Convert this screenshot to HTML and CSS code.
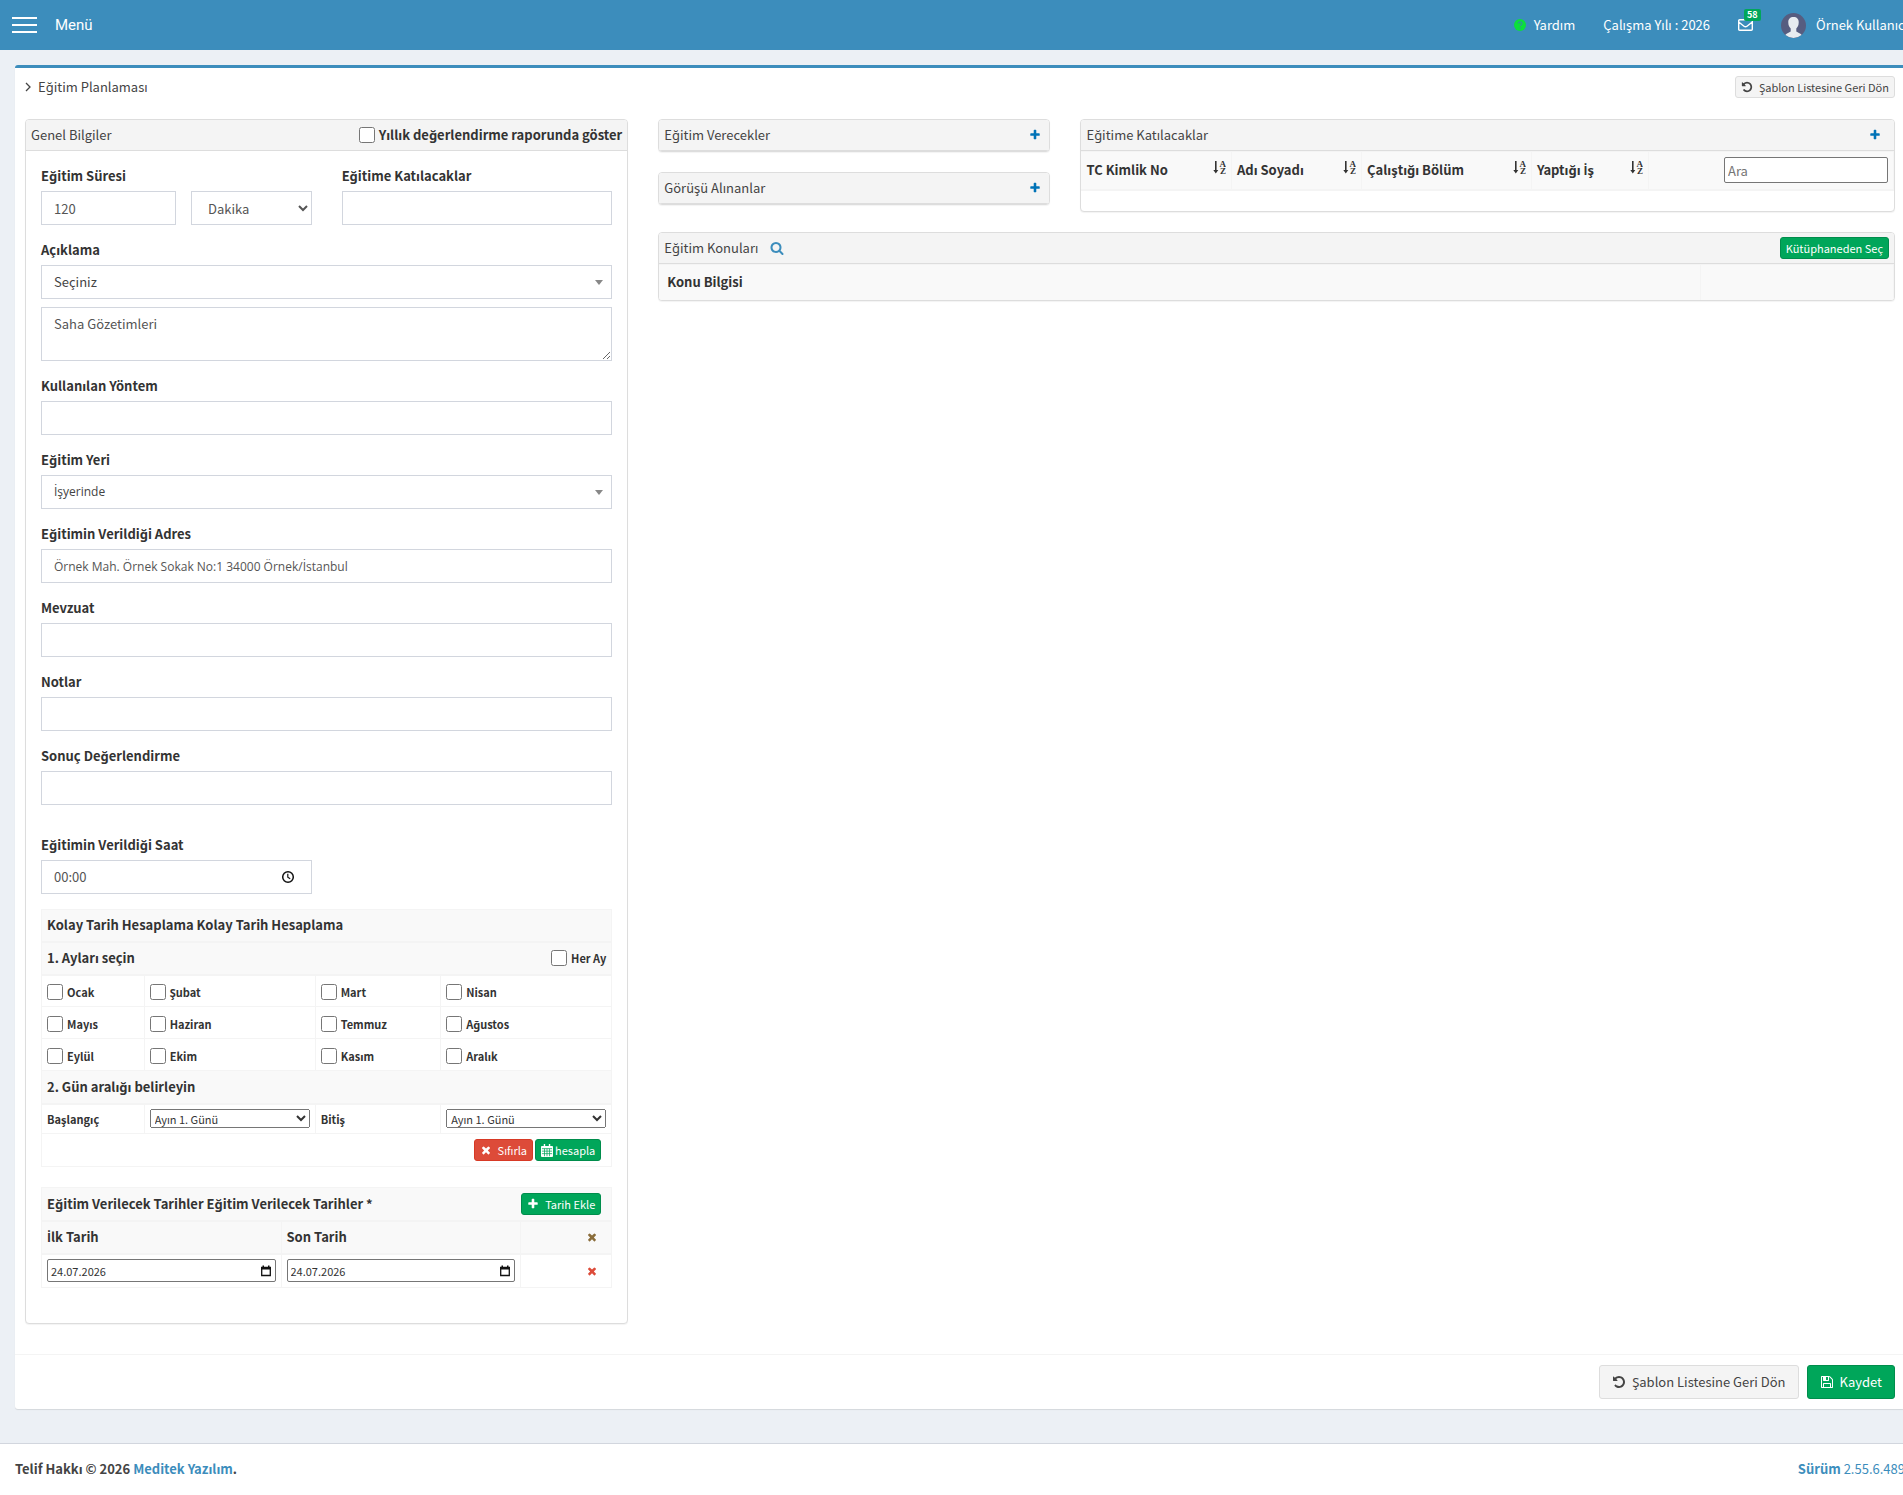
FILE: index.html
```
<!DOCTYPE html>
<html lang="tr">
<head>
    <meta charset="UTF-8">
    <meta name="viewport" content="width=device-width, initial-scale=1.0">
    <title>Eğitim Planlaması</title>
    <link rel="stylesheet" href="styles.css">
</head>
<body>
    <!-- icons -->
    <svg class="sprite" aria-hidden="true">
        <symbol id="i-plus" viewBox="0 0 1792 1792"><path d="M1600 736v192q0 40-28 68t-68 28h-416v416q0 40-28 68t-68 28h-192q-40 0-68-28t-28-68v-416h-416q-40 0-68-28t-28-68v-192q0-40 28-68t68-28h416v-416q0-40 28-68t68-28h192q40 0 68 28t28 68v416h416q40 0 68 28t28 68z"/></symbol>
        <symbol id="i-times" viewBox="0 0 1792 1792"><path d="M1490 1322q0 40-28 68l-136 136q-28 28-68 28t-68-28l-294-294-294 294q-28 28-68 28t-68-28l-136-136q-28-28-28-68t28-68l294-294-294-294q-28-28-28-68t28-68l136-136q28-28 68-28t68 28l294 294 294-294q28-28 68-28t68 28l136 136q28 28 28 68t-28 68l-294 294 294 294q28 28 28 68z"/></symbol>
        <symbol id="i-search" viewBox="0 0 1792 1792"><path d="M1216 832q0-185-131.500-316.500t-316.500-131.500-316.500 131.500-131.500 316.500 131.500 316.500 316.500 131.500 316.500-131.500 131.500-316.500zm512 832q0 52-38 90t-90 38q-54 0-90-38l-343-342q-179 124-399 124-143 0-273.500-55.500t-225-150-150-225-55.500-273.500 55.500-273.500 150-225 225-150 273.500-55.500 273.500 55.500 225 150 150 225 55.500 273.500q0 220-124 399l343 343q37 37 37 90z"/></symbol>
        <symbol id="i-undo" viewBox="0 0 1792 1792"><path d="M1664 896q0 156-61 298t-164 245-245 164-298 61q-172 0-327-72.500t-264-204.500q-7-10-6.500-22.500t8.500-20.500l137-138q10-9 25-9 16 2 23 12 73 95 179 147t225 52q104 0 198.500-40.500t163.500-109.500 109.500-163.500 40.500-198.500-40.500-198.500-109.500-163.500-163.500-109.500-198.500-40.500q-98 0-188 35.500t-160 101.500l137 138q31 30 14 69-17 40-59 40h-448q-26 0-45-19t-19-45v-448q0-42 40-59 39-17 69 14l130 129q107-101 244.500-156.500t284.500-55.500q156 0 298 61t245 164 164 245 61 298z"/></symbol>
        <symbol id="i-save" viewBox="0 0 1792 1792"><path d="M512 1536h768v-384h-768v384zm896 0h128v-896q0-14-10-38.500t-20-34.500l-281-281q-10-10-34-20t-39-10v416q0 40-28 68t-68 28h-576q-40 0-68-28t-28-68v-416h-128v1280h128v-416q0-40 28-68t68-28h832q40 0 68 28t28 68v416zm-384-928v-320q0-13-9.500-22.500t-22.500-9.500h-192q-13 0-22.500 9.500t-9.500 22.500v320q0 13 9.500 22.500t22.500 9.500h192q13 0 22.500-9.500t9.500-22.500zm640 32v928q0 40-28 68t-68 28h-1344q-40 0-68-28t-28-68v-1344q0-40 28-68t68-28h928q40 0 88 20t76 48l280 280q28 28 48 76t20 88z"/></symbol>
        <symbol id="i-angle" viewBox="0 0 6 10"><path d="M1 1l4 4-4 4" fill="none" stroke="currentColor" stroke-width="1.3"/></symbol>
        <symbol id="i-sort" viewBox="0 0 13 15"><path d="M2 1h1.600v9h1.700L2.800 13.500.3 10H2z"/><text x="6.500" y="7" font-size="9" font-family="Liberation Serif, serif">A</text><text x="7" y="14" font-size="9" font-family="Liberation Serif, serif">Z</text></symbol>
        <symbol id="i-help" viewBox="0 0 12 12"><circle cx="6" cy="6" r="6"/><path d="M4.200 4.600q0-1.600 1.900-1.600t1.900 1.500q0 .8-.9 1.300-.8.400-.8 1.200M6.300 8.200v1.300" fill="none" stroke="#2a9d8f" stroke-width="1.300"/></symbol>
        <symbol id="i-mail" viewBox="0 0 15 12"><path d="M.7 1.700q0-1 1-1h11.600q1 0 1 1v8.600q0 1-1 1H1.700q-1 0-1-1zM.7 3l5.300 4.200q1.500 1.200 3 0L14.300 3" fill="none" stroke="currentColor" stroke-width="1.400"/></symbol>
        <symbol id="i-calc" viewBox="0 0 13 14"><path d="M1 2h11q1 0 1 1v10q0 1-1 1H1q-1 0-1-1V3q0-1 1-1zM3 0h1.500v3H3zM8.500 0H10v3H8.500z"/><path d="M1 5h11M1 7.700h11M1 10.400h11M3.800 5v8.200M6.500 5v8.200M9.200 5v8.200" fill="none" stroke="#00a65a" stroke-width=".8"/></symbol>
        <symbol id="i-clock" viewBox="0 0 14 14"><circle cx="7" cy="7" r="5.300" fill="none" stroke="currentColor" stroke-width="1.500"/><path d="M6.800 3.800v3.400l2.400 1.600" fill="none" stroke="currentColor" stroke-width="1.200"/></symbol>
        <symbol id="i-date" viewBox="0 0 12 12"><path d="M1.700 2.500h8.600v8H1.700z" fill="none" stroke="currentColor" stroke-width="1.300"/><path d="M1 2h10v2.500H1zM2.500.5h1.500v2H2.500zM8 .5h1.500v2H8z"/></symbol>
    </svg>

    <div class="wrapper">
        <header class="main-header">
            <button type="button" class="sidebar-toggle" aria-label="Menüyü aç"><span></span><span></span><span></span></button>
            <span class="menu-title">Menü</span>
            <nav class="top-nav">
                <a href="#" class="nav-help"><svg class="icon-help"><use href="#i-help"/></svg>Yardım</a>
                <a href="#" class="nav-year">Çalışma Yılı : 2026</a>
                <a href="#" class="nav-mail" aria-label="Mesajlar"><svg class="icon-mail"><use href="#i-mail"/></svg><span class="badge">58</span></a>
                <a href="#" class="nav-user">
                    <svg class="avatar" viewBox="0 0 25 25"><circle cx="12.500" cy="12.500" r="12.500" fill="#565d80"/><path d="M12.500 4c3.500 0 5.300 2.200 5.200 5.500 0 3-1 4.500-2.400 6v3l4.500 2.500q.6.300.7 1.100a12.500 12.500 0 0 1-16 0q.1-.8.7-1.100l4.500-2.500v-3c-1.400-1.500-2.400-3-2.400-6C7.200 6.200 9 4 12.500 4z" fill="#e7ecf0"/></svg>Örnek Kullanıcı</a>
            </nav>
        </header>

        <main class="box">
            <div class="box-header">
                <div class="breadcrumb"><svg class="icon-angle"><use href="#i-angle"/></svg>Eğitim Planlaması</div>
                <button type="button" class="btn btn-default btn-xs"><svg class="icon"><use href="#i-undo"/></svg>Şablon Listesine Geri Dön</button>
            </div>

            <div class="columns">
                <section class="panel">
                    <div class="panel-heading">
                        <h2>Genel Bilgiler</h2>
                        <label class="check check-lg"><input type="checkbox">Yıllık değerlendirme raporunda göster</label>
                    </div>
                    <form class="panel-body">
                        <div class="form-row">
                            <div class="form-group">
                                <label for="sure">Eğitim Süresi</label>
                                <div class="form-row tight">
                                    <input type="text" id="sure" class="form-control" value="120">
                                    <select class="form-control native" aria-label="Süre birimi"><option>Dakika</option></select>
                                </div>
                            </div>
                            <div class="form-group">
                                <label for="katilacak">Eğitime Katılacaklar</label>
                                <input type="text" id="katilacak" class="form-control">
                            </div>
                        </div>
                        <div class="form-group">
                            <label for="aciklama">Açıklama</label>
                            <div class="select2"><select id="aciklama" class="form-control"><option>Seçiniz</option></select></div>
                            <textarea class="form-control" aria-label="Açıklama metni">Saha Gözetimleri</textarea>
                        </div>
                        <div class="form-group">
                            <label for="yontem">Kullanılan Yöntem</label>
                            <input type="text" id="yontem" class="form-control">
                        </div>
                        <div class="form-group">
                            <label for="yer">Eğitim Yeri</label>
                            <div class="select2"><select id="yer" class="form-control dotted"><option>İşyerinde</option></select></div>
                        </div>
                        <div class="form-group">
                            <label for="adres">Eğitimin Verildiği Adres</label>
                            <input type="text" id="adres" class="form-control dotted" value="Örnek Mah. Örnek Sokak No:1 34000 Örnek/İstanbul">
                        </div>
                        <div class="form-group">
                            <label for="mevzuat">Mevzuat</label>
                            <input type="text" id="mevzuat" class="form-control">
                        </div>
                        <div class="form-group">
                            <label for="notlar">Notlar</label>
                            <input type="text" id="notlar" class="form-control">
                        </div>
                        <div class="form-group last">
                            <label for="sonuc">Sonuç Değerlendirme</label>
                            <input type="text" id="sonuc" class="form-control">
                        </div>
                        <div class="form-row">
                            <div class="form-group">
                                <label for="saat">Eğitimin Verildiği Saat</label>
                                <div class="form-control time-box"><input type="text" id="saat" value="00:00"><svg class="icon-clock"><use href="#i-clock"/></svg></div>
                            </div>
                        </div>

                        <table class="table month-table">
                            <colgroup><col class="c1"><col class="c2"><col class="c3"><col class="c4"></colgroup>
                            <tr class="shade"><th colspan="4">Kolay Tarih Hesaplama Kolay Tarih Hesaplama</th></tr>
                            <tr class="shade tall">
                                <th colspan="4"><div class="cell-split">1. Ayları seçin <label class="check"><input type="checkbox">Her Ay</label></div></th>
                            </tr>
                            <tr class="months">
                                <td><label class="check"><input type="checkbox">Ocak</label></td>
                                <td><label class="check"><input type="checkbox">Şubat</label></td>
                                <td><label class="check"><input type="checkbox">Mart</label></td>
                                <td><label class="check"><input type="checkbox">Nisan</label></td>
                            </tr>
                            <tr class="months">
                                <td><label class="check"><input type="checkbox">Mayıs</label></td>
                                <td><label class="check"><input type="checkbox">Haziran</label></td>
                                <td><label class="check"><input type="checkbox">Temmuz</label></td>
                                <td><label class="check"><input type="checkbox">Ağustos</label></td>
                            </tr>
                            <tr class="months">
                                <td><label class="check"><input type="checkbox">Eylül</label></td>
                                <td><label class="check"><input type="checkbox">Ekim</label></td>
                                <td><label class="check"><input type="checkbox">Kasım</label></td>
                                <td><label class="check"><input type="checkbox">Aralık</label></td>
                            </tr>
                            <tr class="shade tall"><th colspan="4">2. Gün aralığı belirleyin</th></tr>
                            <tr class="range-row">
                                <td><label for="baslangic">Başlangıç</label></td>
                                <td><select id="baslangic"><option>Ayın 1. Günü</option></select></td>
                                <td><label for="bitis">Bitiş</label></td>
                                <td><select id="bitis"><option>Ayın 1. Günü</option></select></td>
                            </tr>
                            <tr class="tall">
                                <td colspan="4"><div class="cell-buttons">
                                    <button type="button" class="btn btn-danger btn-xs"><svg class="icon"><use href="#i-times"/></svg>Sıfırla</button>
                                    <button type="button" class="btn btn-success btn-xs btn-calc"><svg class="icon-calc"><use href="#i-calc"/></svg>hesapla</button>
                                </div></td>
                            </tr>
                        </table>

                        <table class="table date-table">
                            <colgroup><col class="d1"><col class="d1"><col></colgroup>
                            <tr class="shade tall">
                                <th colspan="3"><div class="cell-split">Eğitim Verilecek Tarihler Eğitim Verilecek Tarihler *
                                    <span class="cell-buttons"><button type="button" class="btn btn-success btn-xs"><svg class="icon"><use href="#i-plus"/></svg>Tarih Ekle</button></span></div></th>
                            </tr>
                            <tr class="shade tall">
                                <th><span class="dotted">İ</span>lk Tarih</th>
                                <th>Son Tarih</th>
                                <th><button type="button" class="remove warn" aria-label="Tümünü sil"><svg class="icon-x"><use href="#i-times"/></svg></button></th>
                            </tr>
                            <tr class="date-row">
                                <td><div class="date-box"><input type="text" value="24.07.2026" aria-label="İlk Tarih"><svg class="icon-date"><use href="#i-date"/></svg></div></td>
                                <td><div class="date-box"><input type="text" value="24.07.2026" aria-label="Son Tarih"><svg class="icon-date"><use href="#i-date"/></svg></div></td>
                                <td><button type="button" class="remove" aria-label="Sil"><svg class="icon-x"><use href="#i-times"/></svg></button></td>
                            </tr>
                        </table>
                    </form>
                </section>

                <div class="side">
                    <div class="columns">
                        <div class="stack">
                            <section class="panel">
                                <div class="panel-heading"><h2>Eğitim Verecekler</h2><button type="button" class="add" aria-label="Ekle"><svg class="icon"><use href="#i-plus"/></svg></button></div>
                            </section>
                            <section class="panel">
                                <div class="panel-heading"><h2>Görüşü Alınanlar</h2><button type="button" class="add" aria-label="Ekle"><svg class="icon"><use href="#i-plus"/></svg></button></div>
                            </section>
                        </div>
                        <section class="panel people">
                            <div class="panel-heading"><h2>Eğitime Katılacaklar</h2><button type="button" class="add add-end" aria-label="Ekle"><svg class="icon"><use href="#i-plus"/></svg></button></div>
                            <table class="table people-table">
                                <colgroup><col class="p1"><col class="p2"><col class="p3"><col class="p4"><col></colgroup>
                                <tr class="shade">
                                    <th><div class="cell-split">TC Kimlik No<svg class="icon-sort"><use href="#i-sort"/></svg></div></th>
                                    <th><div class="cell-split">Adı Soyadı<svg class="icon-sort"><use href="#i-sort"/></svg></div></th>
                                    <th><div class="cell-split">Çalıştığı Bölüm<svg class="icon-sort"><use href="#i-sort"/></svg></div></th>
                                    <th><div class="cell-split"><span>Yaptığı <span class="dotted">İ</span>ş</span><svg class="icon-sort"><use href="#i-sort"/></svg></div></th>
                                    <th class="search-cell"><input type="text" placeholder="Ara" aria-label="Ara"></th>
                                </tr>
                            </table>
                        </section>
                    </div>
                    <section class="panel">
                        <div class="panel-heading">
                            <h2>Eğitim Konuları</h2>
                            <a href="#" class="search-link" aria-label="Konu ara"><svg class="icon"><use href="#i-search"/></svg></a>
                            <button type="button" class="btn btn-success btn-xs">Kütüphaneden Seç</button>
                        </div>
                        <table class="table topic-table">
                            <colgroup><col><col class="t2"></colgroup>
                            <tr class="shade"><th>Konu Bilgisi</th><th></th></tr>
                        </table>
                    </section>
                </div>
            </div>

            <div class="box-footer">
                <button type="button" class="btn btn-default"><svg class="icon"><use href="#i-undo"/></svg>Şablon Listesine Geri Dön</button>
                <button type="button" class="btn btn-success"><svg class="icon"><use href="#i-save"/></svg>Kaydet</button>
            </div>
        </main>

        <footer class="main-footer">
            <strong>Telif Hakkı © 2026 <a href="#">Meditek Yazılım</a>.</strong>
            <a href="#"><b>Sürüm</b> 2.55.6.489</a>
        </footer>
    </div>
</body>
</html>
```
FILE: styles.css
```
*{
    box-sizing: border-box;
}
html{
    overflow: hidden;
}
body{
    margin: 0;
    overflow: hidden;
    background-color: #ecf0f5;
    color: #333;
    font-family: "Noto Sans CJK SC", "Noto Sans", sans-serif;
    font-size: 13px;
    line-height: 20px;
}
input, select, textarea, button{
    font: inherit;
    color: inherit;
}
button{
    cursor: pointer;
}
a{
    color: #3c8dbc;
    text-decoration: none;
}
svg{
    flex: none;
    fill: currentColor;
}
.sprite{
    display: none;
}
.wrapper{
    width: calc(100% + 17px);
    min-height: 100vh;
    display: flex;
    flex-direction: column;
}
.dotted{
    font-family: "Open Sans", "Noto Sans", sans-serif;
    font-size: 12px;
}

/* header */
.main-header{
    display: flex;
    align-items: center;
    height: 50px;
    padding: 0 12px;
    background-color: #3c8dbc;
    color: #fff;
}
.sidebar-toggle{
    display: flex;
    flex-direction: column;
    gap: 5px;
    width: 25px;
    padding: 0;
    border: 0;
    background: none;
}
.sidebar-toggle span{
    height: 2px;
    background-color: #fff;
}
.menu-title{
    margin-left: 18px;
    font-family: Roboto, sans-serif;
    font-size: 15px;
}
.top-nav{
    display: flex;
    align-items: center;
    gap: 28px;
    margin-left: auto;
}
.top-nav a{
    display: flex;
    align-items: center;
    color: #fff;
    white-space: nowrap;
}
.icon-help{
    width: 12px;
    height: 12px;
    margin-right: 8px;
    color: #0be03a;
}
.nav-mail{
    position: relative;
}
.icon-mail{
    width: 15px;
    height: 12px;
}
.badge{
    position: absolute;
    top: -10px;
    left: 6px;
    padding: 0 3px;
    border-radius: 2px;
    background-color: #00a65a;
    font-size: 9px;
    font-weight: bold;
    line-height: 12px;
}
.avatar{
    width: 25px;
    height: 25px;
    margin-right: 10px;
}

/* main box */
.box{
    margin: 15px 15px 34px;
    border-top: 3px solid #3c8dbc;
    border-radius: 3px;
    background-color: #fff;
    box-shadow: 0 1px 1px rgba(0, 0, 0, .1);
}
.box-header{
    display: flex;
    justify-content: space-between;
    align-items: center;
    padding: 8px 10px 21px;
    color: #444;
}
.breadcrumb{
    display: flex;
    align-items: center;
}
.icon-angle{
    width: 6px;
    height: 10px;
    margin-right: 7px;
}
.columns{
    display: grid;
    grid-template-columns: calc(33.33% - 20px) 1fr;
    gap: 30px;
    align-items: start;
}
.box > .columns{
    padding: 0 10px 30px;
}
.stack, .side{
    display: grid;
    gap: 20px;
}

/* panels */
.panel{
    border: 1px solid #ddd;
    border-radius: 4px;
    background-color: #fff;
    box-shadow: 0 1px 1px rgba(0, 0, 0, .05);
    overflow: hidden;
}
.panel-heading{
    display: flex;
    align-items: center;
    height: 31px;
    padding: 0 5px;
    border-bottom: 1px solid #ddd;
    background-color: #f4f4f4;
}
.panel-heading h2{
    margin: 0 auto 0 0;
    color: #444;
    font-size: 13px;
    font-weight: normal;
}
.panel-heading .search-link{
    margin: 0 auto 0 12px;
}
.panel-heading h2:has(+ .search-link){
    margin-right: 0;
}
.add, .remove{
    display: flex;
    padding: 0;
    border: 0;
    background: none;
    color: #0073b7;
}
.add{
    margin-right: 3px;
}
.add-end{
    margin-right: 8px;
}
.search-link{
    display: flex;
}
.icon{
    width: 14px;
    height: 14px;
}
.panel .add .icon{
    width: 12px;
    height: 12px;
}
.panel-body{
    padding: 15px 15px 35px;
}

/* form */
.form-row{
    display: grid;
    grid-template-columns: 1fr 1fr;
    gap: 30px;
}
.form-row.tight{
    grid-template-columns: 135px 1fr;
    gap: 15px;
}
.form-group{
    min-width: 0;
    margin-bottom: 15px;
}
.form-group.last{
    margin-bottom: 30px;
}
.form-group > label{
    display: block;
    margin-bottom: 5px;
    font-weight: bold;
}
.form-control{
    display: block;
    width: 100%;
    height: 34px;
    padding: 6px 12px;
    border: 1px solid #d2d6de;
    border-radius: 0;
    background-color: #fff;
    color: #555;
}
textarea.form-control{
    height: 54px;
    margin-top: 8px;
}
.select2{
    position: relative;
}
.select2 select{
    appearance: none;
    color: #444;
}
.select2::after{
    content: "";
    position: absolute;
    top: 15px;
    right: 9px;
    border: 4px solid transparent;
    border-top: 5px solid #888;
    border-bottom: 0;
}
.time-box{
    display: flex;
    align-items: center;
    padding-right: 16px;
}
.time-box input, .date-box input{
    flex: 1;
    min-width: 0;
    padding: 0;
    border: 0;
    outline: 0;
    background: none;
}
.icon-clock{
    width: 14px;
    height: 14px;
    color: #111;
}
.check{
    display: inline-flex;
    align-items: center;
    gap: 4px;
    height: 16px;
    font-size: 11px;
    font-weight: bold;
    white-space: nowrap;
}
.check input{
    width: 16px;
    height: 16px;
    margin: 0;
}
.check-lg{
    font-size: 13px;
}

/* tables */
.table{
    width: 100%;
    border-collapse: collapse;
    table-layout: fixed;
}
.table th, .table td{
    height: 32px;
    padding: 0 5px;
    border: 1px solid #f4f4f4;
    text-align: left;
    vertical-align: middle;
}
.shade{
    background-color: #f9f9f9;
}
.table .shade th{
    border-bottom-width: 2px;
}
.cell-split{
    display: flex;
    align-items: center;
    justify-content: space-between;
}
.cell-buttons{
    display: flex;
    justify-content: flex-end;
    gap: 2px;
    padding-right: 5px;
}
.table .tall td, .table .tall th{
    height: 33px;
}
.table .months td{
    padding-top: 5px;
    line-height: 16px;
}
.table .date-row td{
    height: 34px;
}
.table .range-row td{
    height: 30px;
    font-size: 11px;
    font-weight: bold;
}
.range-row select{
    display: block;
    width: 100%;
    height: 19px;
    padding: 0;
    font-weight: normal;
    line-height: 16px;
}
.c1{
    width: 18%;
}
.c2, .c4{
    width: 30%;
}
.c3{
    width: 22%;
}
.date-table{
    margin-top: 20px;
}
.d1{
    width: 42%;
}
.date-box{
    display: flex;
    align-items: center;
    height: 23px;
    padding: 0 3px;
    border: 1px solid #767676;
    border-radius: 2px;
    background-color: #fff;
    font-size: 11px;
}
.icon-date{
    width: 12px;
    height: 12px;
    color: #111;
}
.remove{
    margin: 0 8px 0 auto;
    color: #dd4b39;
}
.remove.warn{
    color: #8a6d3b;
}
.icon-x{
    width: 12px;
    height: 12px;
}
.people{
    padding-bottom: 20px;
}
.table.people-table th{
    height: 38px;
}
.people-table tr th:first-child, .topic-table tr th:first-child{
    border-left: 0;
}
.icon-sort{
    width: 13px;
    height: 15px;
    margin-bottom: 6px;
}
.p1{
    width: 150px;
}
.p2{
    width: 130px;
}
.p3{
    width: 170px;
}
.p4{
    width: 117px;
}
.table .search-cell{
    text-align: right;
}
.search-cell input{
    width: 164px;
    height: 26px;
    padding: 0 3px;
    border: 1px solid #767676;
    border-radius: 2px;
    font-weight: normal;
}
.t2{
    width: 193px;
}
.table.topic-table th{
    height: 36px;
    padding-left: 8px;
    border-bottom: 0;
}

/* buttons */
.btn{
    display: inline-flex;
    align-items: center;
    gap: 6px;
    height: 34px;
    padding: 0 12px;
    border: 1px solid transparent;
    border-radius: 3px;
    font-weight: normal;
    white-space: nowrap;
}
.btn-xs{
    height: 22px;
    padding: 0 5px;
    font-size: 11px;
}
.btn-xs .icon{
    width: 12px;
    height: 12px;
}
.btn-default{
    border-color: #ddd;
    background-color: #f4f4f4;
    color: #444;
}
.btn-success{
    border-color: #008d4c;
    background-color: #00a65a;
    color: #fff;
}
.btn-danger{
    border-color: #d73925;
    background-color: #dd4b39;
    color: #fff;
}
.btn-calc{
    gap: 2px;
}
.icon-calc{
    width: 12px;
    height: 13px;
}

/* footers */
.box-footer{
    display: flex;
    justify-content: flex-end;
    gap: 8px;
    padding: 10px;
    border-top: 1px solid #f4f4f4;
}
.main-footer{
    display: flex;
    flex: 1;
    justify-content: space-between;
    padding: 15px;
    border-top: 1px solid #d2d6de;
    background-color: #fff;
    color: #444;
}
```
